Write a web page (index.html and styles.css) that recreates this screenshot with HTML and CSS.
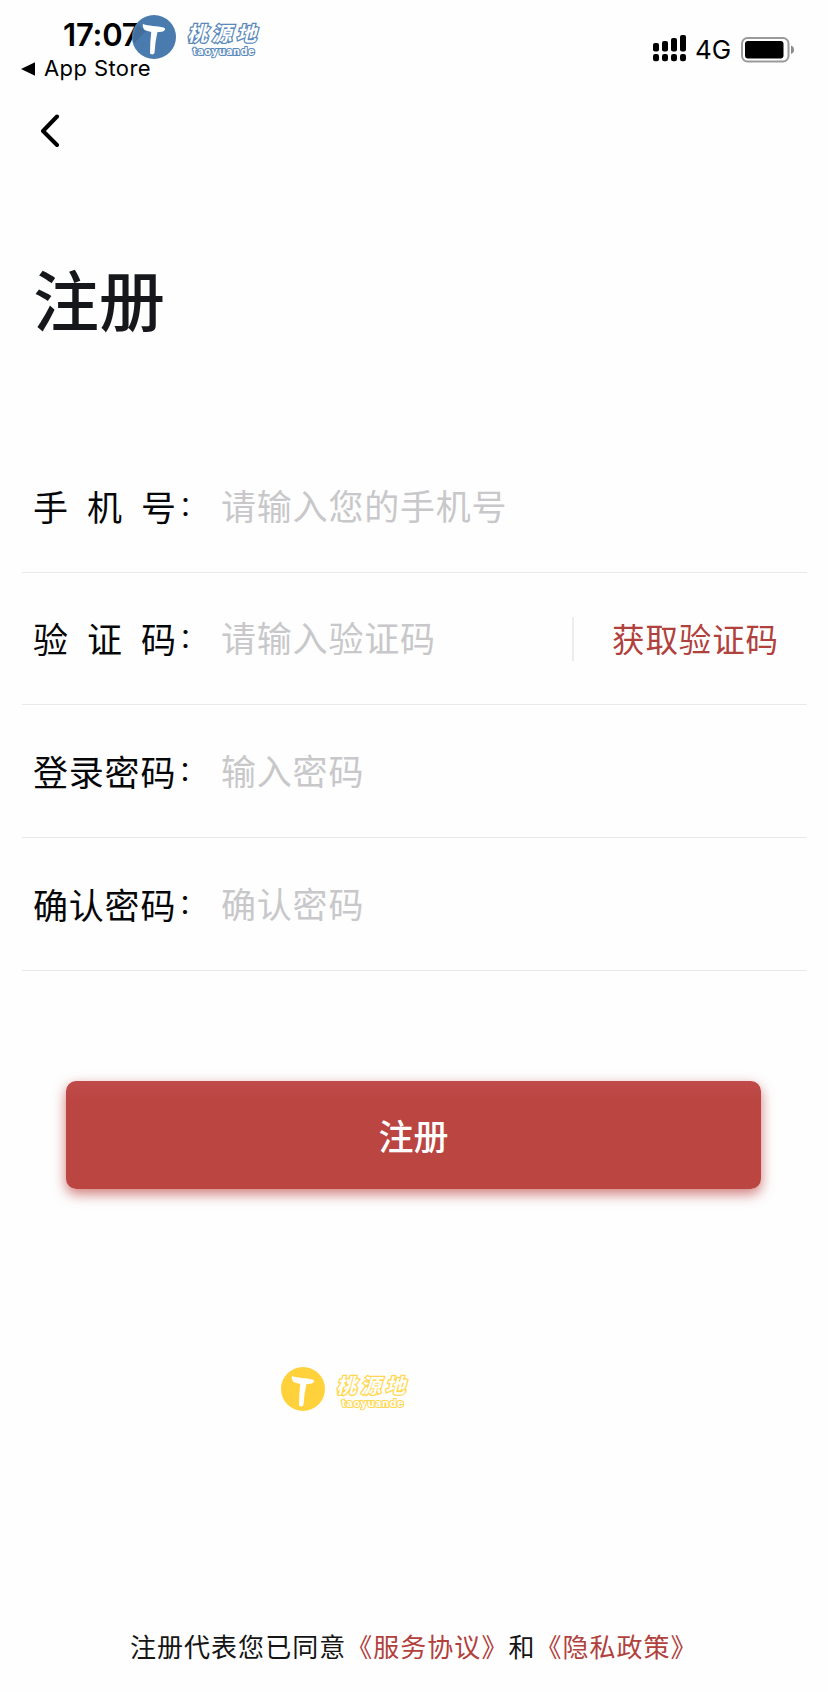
FILE: index.html
```html
<!DOCTYPE html>
<html lang="zh-CN">
<head>
<meta charset="utf-8">
<title>注册</title>
<link rel="stylesheet" href="styles.css">
</head>
<body>
<main class="screen">
  <header class="status">
    <div class="status-left">
      <div class="clock">17:07</div>
      <div class="return-app">
        <svg width="15" height="14" viewBox="0 0 15 14"><path d="M0 7 14 0.300V13.700Z"/></svg>
        <span>App Store</span>
      </div>
    </div>
    <div class="status-right">
      <svg class="signal" width="34" height="27" viewBox="0 0 34 27">
        <rect x="0" y="8" width="6" height="8.500" rx="2"/><rect x="9" y="6" width="6" height="10.500" rx="2"/><rect x="18" y="3" width="6" height="13.500" rx="2"/><rect x="27" y="0" width="6" height="16.500" rx="2"/>
        <rect x="0" y="19" width="6" height="7.300" rx="2.200"/><rect x="9" y="19" width="6" height="7.300" rx="2.200"/><rect x="18" y="19" width="6" height="7.300" rx="2.200"/><rect x="27" y="19" width="6" height="7.300" rx="2.200"/>
      </svg>
      <span class="network">4G</span>
      <svg class="battery" width="54" height="26" viewBox="0 0 54 26">
        <rect x="1" y="1" width="46.500" height="23.500" rx="5.500" fill="none" stroke="#9a9a9a" stroke-width="2"/>
        <rect x="4" y="4" width="38.500" height="17.500" rx="3"/>
        <path d="M50 8.500Q53 9.500 53 12.700T50 17Z" fill="#8c8c8c"/>
      </svg>
    </div>
  </header>
  <nav class="nav">
    <svg width="20" height="34" viewBox="0 0 20 34"><path d="M17 2.500 3 17 17 31" fill="none" stroke="#000" stroke-width="4" stroke-linecap="round" stroke-linejoin="round"/></svg>
  </nav>
  <h1 class="title">注册</h1>
  <form class="form">
    <div class="row"><label class="label"><span class="wide">手机</span>号<span class="colon">：</span></label><span class="hint">请输入您的手机号</span></div>
    <div class="row"><label class="label"><span class="wide">验证</span>码<span class="colon">：</span></label><span class="hint">请输入验证码</span><span class="get-code">获取验证码</span></div>
    <div class="row"><label class="label">登录密码<span class="colon">：</span></label><span class="hint">输入密码</span></div>
    <div class="row"><label class="label">确认密码<span class="colon">：</span></label><span class="hint">确认密码</span></div>
  </form>
  <button class="submit" type="button">注册</button>
  <footer class="terms">注册代表您已同意<a>《服务协议》</a>和<a>《隐私政策》</a></footer>

  <div class="mark mark-blue">
    <svg width="44" height="44" viewBox="0 0 44 44"><circle cx="22" cy="22" r="22" fill="currentColor"/><path d="M1.500 29Q0 18 6 10L14 16Z" fill="#000" opacity=".1"/><g fill="#fff"><path d="M11 9C16 11 25 11 31.500 12.500Q35 14 31 16.500Q21 18.500 12.500 15Q10 11.500 11 9Z"/><path d="M19.500 14Q22 12 26 14Q23 27 22.500 38Q21 40.500 18 38.500Q18 27 19.500 14Z"/></g></svg>
    <div class="mark-text"><span class="mark-cn">桃源地</span><span class="mark-en">taoyuande</span></div>
  </div>
  <div class="mark mark-yellow">
    <svg width="44" height="44" viewBox="0 0 44 44"><circle cx="22" cy="22" r="22" fill="currentColor"/><g fill="#fff"><path d="M11 9C16 11 25 11 31.500 12.500Q35 14 31 16.500Q21 18.500 12.500 15Q10 11.500 11 9Z"/><path d="M19.500 14Q22 12 26 14Q23 27 22.500 38Q21 40.500 18 38.500Q18 27 19.500 14Z"/></g></svg>
    <div class="mark-text"><span class="mark-cn">桃源地</span><span class="mark-en">taoyuande</span></div>
  </div>
</main>
</body>
</html>
```
FILE: styles.css
```css
* { box-sizing: border-box; }
body { margin: 0; background: #fefefe; }
.screen {
  position: relative;
  width: 828px;
  height: 1692px;
  overflow: hidden;
  display: flex;
  flex-direction: column;
  font-family: "Noto Sans CJK SC", sans-serif;
  color: #060709;
}
.status {
  height: 96px;
  display: flex;
  justify-content: space-between;
  font-family: Inter, "Liberation Sans", sans-serif;
  color: #000;
}
.status-left { padding: 16px 0 0 21px; }
.clock { height: 37px; padding-left: 42px; font-size: 31px; line-height: 37px; font-weight: 600; letter-spacing: -0.200px; }
.return-app { height: 31px; display: flex; align-items: center; gap: 8px; font-size: 22px; line-height: 31px; letter-spacing: 0.400px; }
.status-right { display: flex; align-items: flex-start; padding: 35px 33px 0 0; }
.network { width: 35px; margin: 0 11px 0 8px; font-size: 26px; line-height: 30px; }
.signal { margin-left: -1px; }
.battery { margin-top: 2px; }
.nav { height: 70px; padding: 18px 0 0 40px; }
.title { margin: 83px 0 0 33px; height: 96px; font-size: 66px; line-height: 96px; font-weight: 500; color: #15171a; }
.form { margin: 95px 21px 0 22px; }
.row {
  height: 132.660px;
  display: flex;
  align-items: center;
  border-bottom: 1px solid #e9e9e9;
  padding-left: 11px;
  font-size: 35px;
  letter-spacing: 0.800px;
  line-height: 48px;
}
.label { width: 188px; white-space: nowrap; }
.wide { letter-spacing: 19px; }
.colon { display: inline-block; position: relative; left: 2px; top: -5px; font-size: 27px; line-height: 27px; }
.hint { color: #c8c8ca; position: relative; top: -1px; }
.get-code {
  margin-left: auto;
  width: 235px;
  height: 44px;
  position: relative;
  top: 1px;
  padding-left: 38px;
  border-left: 2px solid #ededed;
  color: #b1413d;
  font-size: 32.500px;
  letter-spacing: 0.900px;
  line-height: 42px;
}
.submit {
  margin: 110px 67px 0 66px;
  height: 108px;
  flex: none;
  border: 0;
  border-radius: 10px;
  padding: 0;
  background: linear-gradient(#c04b4a, #ba4541 20px);
  box-shadow: 0 5px 13px rgba(186, 69, 65, 0.7);
  color: #fff;
  font: 500 35px/108px "Noto Sans CJK SC", sans-serif;
}
.submit { padding-bottom: 2px; }
.terms { margin: auto 0 26px 130px; height: 40px; font-size: 26px; letter-spacing: 1.030px; line-height: 40px; white-space: nowrap; color: #151515; }
.terms a { color: #b1413d; }
.mark { position: absolute; display: flex; gap: 10px; }
.mark-blue { left: 132px; top: 15px; color: #4a7bae; }
.mark-yellow { left: 281px; top: 1367px; color: #ffd23c; }
.mark-text { width: 76px; display: flex; flex-direction: column; align-items: center; padding-top: 6px; }
.mark-cn { height: 24px; font-size: 20px; line-height: 24px; letter-spacing: 4.500px; font-weight: 700; font-style: italic; color: #fff; }
.mark-en { font: 700 10.500px/13px Inter, sans-serif; letter-spacing: 0.900px; color: #fff; }
.mark-cn, .mark-en { paint-order: stroke fill; }
.mark-blue .mark-cn { -webkit-text-stroke: 2.600px #5a89ba; }
.mark-blue .mark-en { -webkit-text-stroke: 2px #5a89ba; }
.mark-yellow .mark-cn { -webkit-text-stroke: 2.600px #ffd750; }
.mark-yellow .mark-en { -webkit-text-stroke: 2px #ffd750; }
```
